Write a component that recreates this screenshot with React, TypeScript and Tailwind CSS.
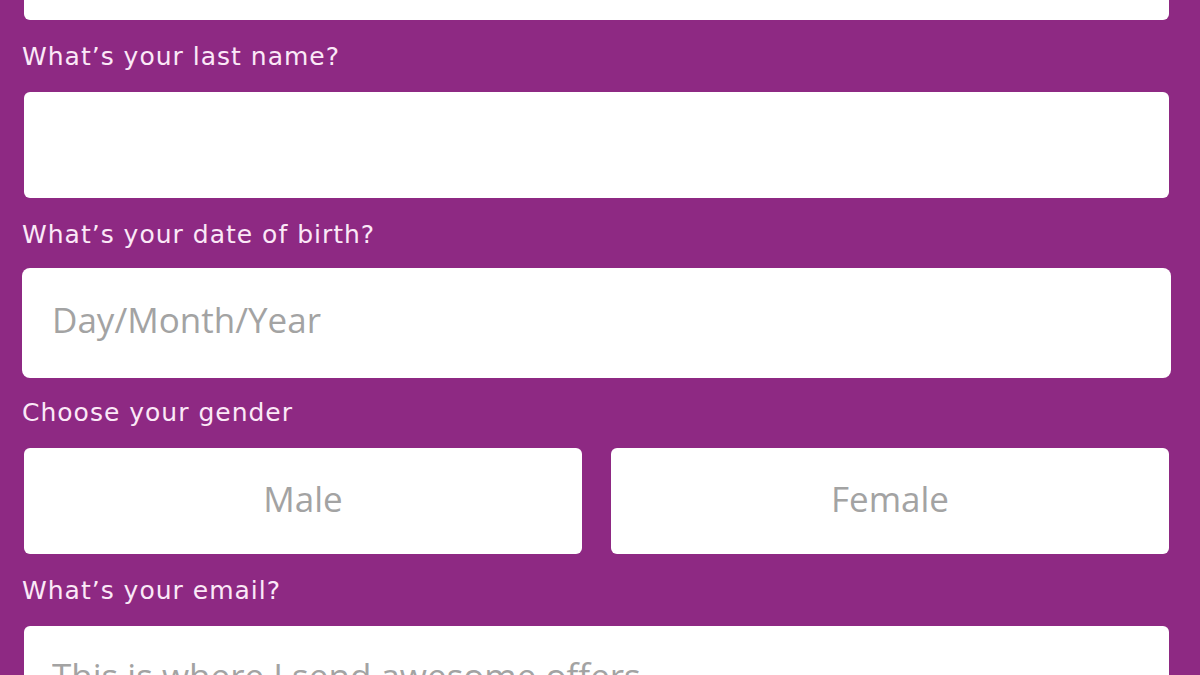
import { useState } from 'react';

type Gender = 'male' | 'female' | null;

function Label({ children }: { children: React.ReactNode }) {
  return (
    <div className="flex h-[72px] items-center -ml-0.5 font-['DejaVu_Sans',sans-serif] text-[25px] tracking-[1px] leading-none text-[#fbe8f7]">
      {children}
    </div>
  );
}

const inputCls =
  'block h-[106px] w-full rounded-md bg-white px-7 pb-2 text-[35px] text-[#555] outline-none placeholder:text-[#a3a3a3]';

export default function App() {
  const [gender, setGender] = useState<Gender>(null);

  return (
    <div className="h-[675px] overflow-hidden bg-[#8e2983] pl-6 pr-[31px] font-['Open_Sans',sans-serif]">
      <div className="-mt-[86px] flex flex-col">
        {/* first name, scrolled mostly out of view */}
        <input className={inputCls} />

        <Label>What’s your last name?</Label>
        <input className={inputCls} />

        <Label>What’s your date of birth?</Label>
        <input className={inputCls + ' ring-2 ring-white'} placeholder="Day/Month/Year" />

        <Label>Choose your gender</Label>
        <div className="grid grid-cols-2 gap-[29px]">
          {(['male', 'female'] as const).map((g) => (
            <button
              key={g}
              onClick={() => setGender(g)}
              className="h-[106px] rounded-md bg-white pb-1 text-[35px] text-[#a3a3a3]"
            >
              <span className={gender === g ? 'text-[#8e2983]' : ''}>{g === 'male' ? 'Male' : 'Female'}</span>
            </button>
          ))}
        </div>

        <Label>What’s your email?</Label>
        <input className={inputCls} placeholder="This is where I send awesome offers" />
      </div>
    </div>
  );
}
